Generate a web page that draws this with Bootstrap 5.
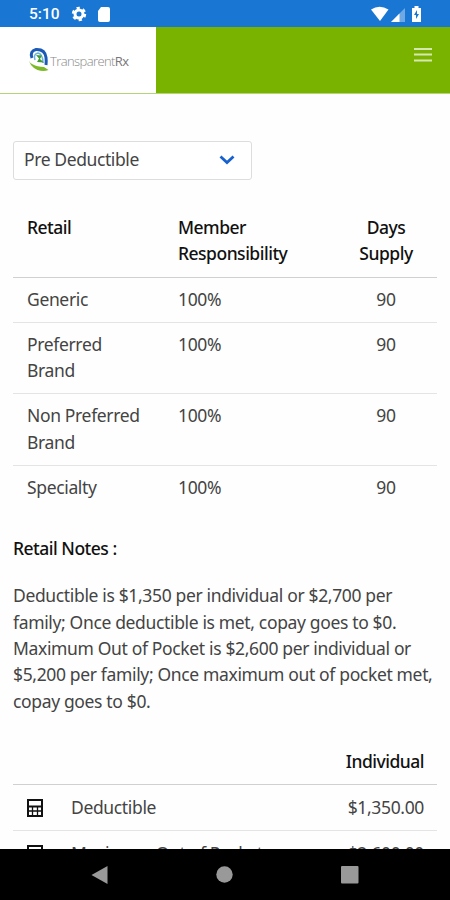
<!DOCTYPE html>
<html lang="en">
<head>
<meta charset="utf-8">
<meta name="viewport" content="width=device-width, initial-scale=1">
<title>TransparentRx</title>
<link href="https://cdn.jsdelivr.net/npm/bootstrap@5.3.0/dist/css/bootstrap.min.css" rel="stylesheet">
<style>
body{font-family:"Noto Sans",sans-serif;font-size:17.5px;line-height:26.3px;letter-spacing:-.35px;color:#444;background:#fefefe}
.screen{height:900px}
.status{height:27px;background:#1976d2;font:500 15.5px/27px Roboto,sans-serif;letter-spacing:0;padding:1px 27px 0 29px}
.sys-left{margin-left:11px}
.brandbar{height:66.5px;background:#7ab200;border-bottom:1px solid #b4d47a}
.logo{width:156px;padding-left:28px}
.logo-name{font:300 13px/20px "Open Sans",sans-serif;color:#888;letter-spacing:-.6px;padding-top:3px}
.logo-name b{font-weight:400;color:#777}
.menu{width:20px;height:20px;margin:18px 17px 0 0}
main{padding:47px 13px 0}
.picker{width:239px;height:39.5px;padding:0 16px 2px 10px;border:1px solid #ddd;border-radius:3px;color:#444;font-size:17.5px;letter-spacing:-.4px;background:#fff}
.plan{--bs-table-bg:transparent;table-layout:fixed;line-height:26.3px;margin:0;color:#444}
.plan>:not(caption)>*>*{padding:8px 14px 9.7px;border-color:#e4e4e4;color:#444}
.plan>thead>tr>th{border-color:#d0d0d0;color:#111;font-weight:500;letter-spacing:-.5px;padding-top:9px;padding-bottom:10.4px;vertical-align:top}
.plan>tbody>tr:last-child>td{border-bottom:0}
.benefits{margin-top:25px}
.benefits .c1{width:151px}.benefits .c3{width:102px}
.benefits .c2{width:171px}
.notes-title{font-weight:500;color:#111;margin:25.5px 0 21px;font-size:17.5px;line-height:26.3px;letter-spacing:-.5px}
.notes{margin:0 0 25px}
.totals .c1{width:44px}.totals .c3{width:130px}
.totals>tbody>tr>td{padding:9px 13px 9.7px 14px}
.totals>thead>tr>th{padding-right:13px}
.calc{display:block;margin-top:5px}
.navbtns{height:51px;background:#000;padding:0 91px;flex:none}
.t{display:inline-block;white-space:nowrap}
</style>
<script src="https://cdn.jsdelivr.net/npm/bootstrap@5.3.0/dist/js/bootstrap.bundle.min.js"></script>
</head>
<body>
<div class="screen d-flex flex-column overflow-hidden">
<div class="status d-flex align-items-center text-white flex-shrink-0">
<span>5:10</span>
<svg class="sys-left" width="40" height="18" viewBox="0 0 40 18"><g fill="none" stroke="#fff"><circle cx="8" cy="9" r="4" stroke-width="3"/><circle cx="8" cy="9" r="6" stroke-width="2.400" stroke-dasharray="3.200 3.083"/></g><path fill="#fff" d="M30 2h7q2 0 2 2v11q0 2-2 2H29q-2 0-2-2V6z"/></svg>
<svg class="ms-auto" width="52" height="18" viewBox="0 0 52 18"><path fill="#fff" d="M0 4.500Q8.500-1 17.500 4.500L9 16z"/><path fill="#6fa9e4" d="M34 3v14H20z"/><path fill="#fff" d="M28.500 8.500V17H20zM41 3h2.500V1h4v2H50v14h-9V3z"/><path fill="#1976d2" d="M46 5l-3 5h2v4l3-5h-2z"/></svg>
</div>
<header class="brandbar d-flex flex-shrink-0">
<div class="logo bg-white d-flex align-items-center flex-shrink-0">
<svg width="22" height="26" viewBox="0 0 22 26" fill="none"><path d="M4 11Q1.500 4 8 2.500q9-.5 10 8 .5 4 0 7.500" stroke="#1c5ab8" stroke-width="3"/><path d="M7 13Q5 7 10 6q5 1 5 10" stroke="#6db3dc" stroke-width="1.500"/><path d="M8 8l6 .5-2 3.500 4 3.500-7-.5 2-3.500z" fill="#3f9c35"/><path d="M1 12q0 4 4 5.500 4 2 11 2.500l4.500 3q-5 2-11 0Q1 19 1 12z" fill="#7dba2a"/></svg>
<span class="logo-name t">Transparent<b>Rx</b></span>
</div>
<svg class="menu ms-auto" viewBox="0 0 20 20" role="img" aria-label="Menu"><path stroke="#d5e8b2" stroke-width="2" d="M1 4h18M1 9.500h18M1 15.500h18"/></svg>
</header>
<main class="flex-grow-1 overflow-hidden">
<button class="picker d-flex align-items-center justify-content-between" type="button"><span class="t">Pre Deductible</span>
<svg width="16" height="12" viewBox="0 0 16 12" fill="none" stroke="#1761cf" stroke-width="2.800"><path d="M1.500 3.500l6.500 6 6.500-6"/></svg></button>
<table class="table plan benefits">
<colgroup><col class="c1"><col class="c2"><col class="c3"></colgroup>
<thead><tr><th>Retail</th><th>Member<br>Responsibility</th><th class="text-center">Days<br>Supply</th></tr></thead>
<tbody>
<tr><td>Generic</td><td>100%</td><td class="text-center">90</td></tr>
<tr><td>Preferred<br>Brand</td><td>100%</td><td class="text-center">90</td></tr>
<tr><td><span class="t">Non Preferred</span><br>Brand</td><td>100%</td><td class="text-center">90</td></tr>
<tr><td>Specialty</td><td>100%</td><td class="text-center">90</td></tr>
</tbody></table>
<h2 class="notes-title">Retail Notes :</h2>
<p class="notes text-nowrap">Deductible is $1,350 per individual or $2,700 per<br>family; Once deductible is met, copay goes to $0.<br>Maximum Out of Pocket is $2,600 per individual or<br>$5,200 per family; Once maximum out of pocket met,<br>copay goes to $0.</p>
<table class="table plan totals">
<colgroup><col class="c1"><col><col class="c3"></colgroup>
<thead><tr><th></th><th></th><th class="text-end">Individual</th></tr></thead>
<tbody>
<tr><td><svg class="calc" width="16" height="18" viewBox="0 0 16 18" fill="none" stroke="#111"><path stroke-width="2" d="M1 1h14v16H1zM1 7.500h14"/><path stroke-width="1.300" d="M1 12h14M5.500 7.500V17M10.500 7.500V17"/></svg></td><td>Deductible</td><td class="text-end">$1,350.00</td></tr>
<tr><td><svg class="calc" width="16" height="18" viewBox="0 0 16 18" fill="none" stroke="#111"><path stroke-width="2" d="M1 1h14v16H1zM1 7.500h14"/><path stroke-width="1.300" d="M1 12h14M5.500 7.500V17M10.500 7.500V17"/></svg></td><td><span class="t">Maximum Out of Pocket</span></td><td class="text-end">$2,600.00</td></tr>
</tbody></table>
</main>
<nav class="navbtns d-flex align-items-center justify-content-between">
<svg width="17" height="18" viewBox="0 0 17 18"><path fill="#999" d="M16.500 0v18L.5 9z"/></svg>
<svg width="17" height="17" viewBox="0 0 17 17"><circle cx="8.500" cy="8.500" r="8.200" fill="#999"/></svg>
<svg width="18" height="18" viewBox="0 0 18 18"><rect width="17.500" height="17.500" rx="1" fill="#999"/></svg>
</nav>
</div>
</body>
</html>
